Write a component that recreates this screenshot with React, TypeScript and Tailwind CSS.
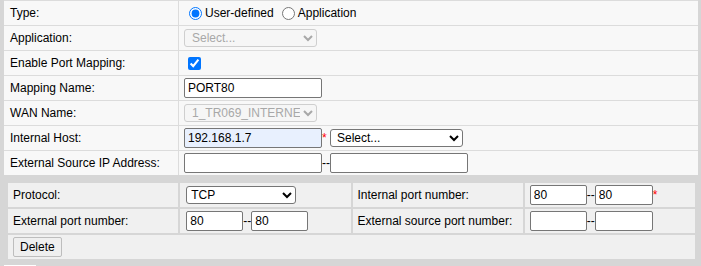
import type { ReactNode } from "react";

const inputCls =
  "h-[20px] rounded-[2px] border border-[#767676] bg-white px-[3px] text-black outline-none";
const selectCls =
  "h-[18px] rounded-[3px] border border-[#767676] bg-white pl-[2px] text-black outline-none";
const disabledSelectCls =
  "h-[18px] rounded-[3px] border border-[#cfcfcf] bg-[#f6f6f6] pl-[3px] text-[#a8a8a8] outline-none";

function TopRow({ label, children }: { label: string; children: ReactNode }) {
  return (
    <div className="grid h-[25px] grid-cols-[174px_1fr] border-t border-[#dcdcdc]">
      <div className="flex items-center pl-[6px]">{label}</div>
      <div className="flex items-center border-l border-[#dcdcdc] pl-[5px]">{children}</div>
    </div>
  );
}

function Cell({ children, className = "" }: { children?: ReactNode; className?: string }) {
  return (
    <div className={"flex h-[24px] items-center bg-[#f0f0f0] pl-[5px] " + className}>
      {children}
    </div>
  );
}

function Star() {
  return <span className="text-[#ff0000]">*</span>;
}

export default function App() {
  return (
    <div className="h-[266px] w-[701px] overflow-hidden bg-[#d6d6d6] font-['Liberation_Sans',Arial,sans-serif] text-[12px] text-black">
      <div className="ml-[4px] w-[694px] bg-[#f8f8f8]">
        <TopRow label="Type:">
          <label className="flex items-center">
            <input type="radio" name="type" defaultChecked className="ml-[5px] mr-[3px]" />
            User-defined
          </label>
          <label className="ml-[3px] flex items-center">
            <input type="radio" name="type" className="ml-[5px] mr-[3px]" />
            Application
          </label>
        </TopRow>
        <TopRow label="Application:">
          <select disabled className={disabledSelectCls + " w-[133px]"}>
            <option>Select...</option>
          </select>
        </TopRow>
        <TopRow label="Enable Port Mapping:">
          <input type="checkbox" defaultChecked className="ml-[4px]" />
        </TopRow>
        <TopRow label="Mapping Name:">
          <input className={inputCls + " w-[138px]"} defaultValue="PORT80" />
        </TopRow>
        <TopRow label="WAN Name:">
          <select disabled className={disabledSelectCls + " w-[133px]"}>
            <option>1_TR069_INTERNET_R_VID_</option>
          </select>
        </TopRow>
        <TopRow label="Internal Host:">
          <div>
            <input
              className="h-[20px] w-[138px] rounded-[2px] border border-[#767676] bg-[#e8f0fe] px-[3px] text-black outline-none"
              defaultValue="192.168.1.7"
            />
            <Star />{" "}
            <select className={selectCls + " w-[133px]"}>
              <option>Select...</option>
            </select>
          </div>
        </TopRow>
        <TopRow label="External Source IP Address:">
          <div>
            <input className={inputCls + " w-[138px]"} />
            {"--"}
            <input className={inputCls + " w-[138px]"} />
          </div>
        </TopRow>
      </div>

      <div className="ml-[6px] mt-[6px] grid w-[691px] grid-cols-4 gap-[2px] bg-[#d6d6d6] p-[2px]">
        <Cell>Protocol:</Cell>
        <Cell className="pl-[6px]">
          <select className="h-[18px] w-[110px] rounded-[3px] border border-[#767676] bg-white pl-0 text-black outline-none">
            <option>TCP</option>
          </select>
        </Cell>
        <Cell>Internal port number:</Cell>
        <Cell>
          <div>
            <input className={inputCls + " w-[57px]"} defaultValue="80" />
            {"--"}
            <input className={inputCls + " w-[58px]"} defaultValue="80" />
            <Star />
          </div>
        </Cell>
        <Cell>External port number:</Cell>
        <Cell className="pl-[6px]">
          <div>
            <input className={inputCls + " w-[57px]"} defaultValue="80" />
            {"--"}
            <input className={inputCls + " w-[57px]"} defaultValue="80" />
          </div>
        </Cell>
        <Cell>External source port number:</Cell>
        <Cell>
          <div>
            <input className={inputCls + " w-[57px]"} />
            {"--"}
            <input className={inputCls + " w-[58px]"} />
          </div>
        </Cell>
        <Cell className="col-span-4">
          <button className="h-[20px] rounded-[2px] border border-[#bdbdbd] bg-[#efefef] px-[6px] text-black">
            Delete
          </button>
        </Cell>
      </div>

      <div className="ml-[4px] mt-[4px] h-[20px] w-[32px] bg-white" />
    </div>
  );
}
